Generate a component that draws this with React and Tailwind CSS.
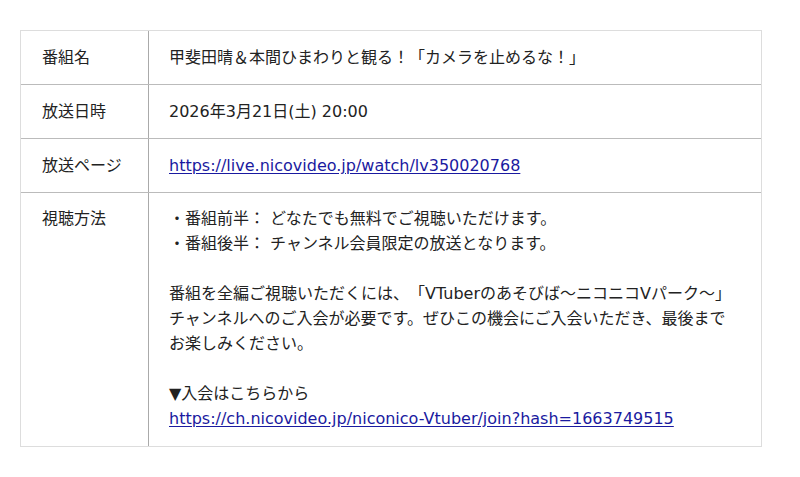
export default function App() {
  const font = { fontFamily: '"DejaVu Sans", "Noto Sans CJK JP", sans-serif' };
  const link = "text-[#1a1aa0] underline underline-offset-2";
  const rows = [
    ["番組名", <span>甲斐田晴＆本間ひまわりと観る！「カメラを止めるな！」</span>],
    ["放送日時", <span>2026年3月21日(土) 20:00</span>],
    ["放送ページ", <a className={link} href="#">https://live.nicovideo.jp/watch/lv350020768</a>],
  ];
  return (
    <div className="w-[800px] h-[477px] bg-white pt-[30px] pl-[20px] text-[16px] leading-[25px] text-[#222] [text-spacing-trim:space-all]" style={font}>
      <div className="w-[742px] border border-[#ddd]">
        {rows.map(([k, v]) => (
          <div key={k} className="flex border-b border-[#bbb]">
            <div className="w-[128px] shrink-0 border-r border-[#aaa] pl-[21px] py-[14px]">{k}</div>
            <div className="pl-[20px] py-[14px] whitespace-nowrap">{v}</div>
          </div>
        ))}
        <div className="flex">
          <div className="w-[128px] shrink-0 border-r border-[#aaa] pl-[21px] py-[13px]">視聴方法</div>
          <div className="pl-[20px] pt-[13px] pb-[15px] whitespace-nowrap flex flex-col">
            <div>・番組前半： どなたでも無料でご視聴いただけます。</div>
            <div>・番組後半： チャンネル会員限定の放送となります。</div>
            <div className="h-[25px]"></div>
            <div>番組を全編ご視聴いただくには、「VTuberのあそびば～ニコニコVパーク～」</div>
            <div>チャンネルへのご入会が必要です。ぜひこの機会にご入会いただき、最後まで</div>
            <div>お楽しみください。</div>
            <div className="h-[25px]"></div>
            <div>▼入会はこちらから</div>
            <div><a className={link} href="#">https://ch.nicovideo.jp/niconico-Vtuber/join?hash=1663749515</a></div>
          </div>
        </div>
      </div>
    </div>
  );
}
